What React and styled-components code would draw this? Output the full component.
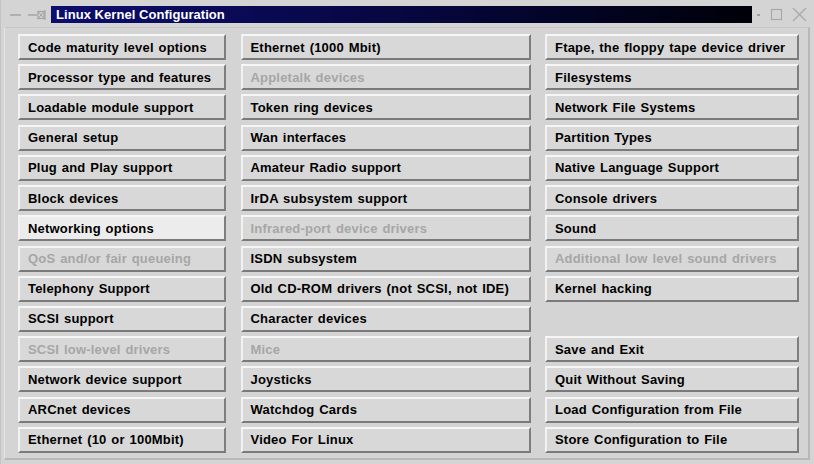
import React from 'react';
import styled, { createGlobalStyle } from 'styled-components';

const GlobalStyle = createGlobalStyle`
  html, body {
    margin: 0;
    padding: 0;
    background: #d4d4d4;
  }
  body {
    font-family: "Liberation Sans", Arial, sans-serif;
  }
`;

const Window = styled.div`
  width: 814px;
  height: 464px;
  box-sizing: border-box;
  background: #d4d4d4;
  display: flex;
  flex-direction: column;
  padding: 6px 4px 4px 3px;
  border-left: 1px solid #c4c4c4;
`;

const TitleBar = styled.div`
  display: flex;
  align-items: stretch;
  height: 17px;
`;

const LeftControls = styled.div`
  width: 47px;
  display: flex;
  align-items: center;
  padding-left: 5px;
  box-sizing: border-box;
`;

const Title = styled.div`
  flex: 1;
  background: linear-gradient(to right, #0d0d6e 0%, #06063c 55%, #000008 100%);
  color: #ffffff;
  font-weight: bold;
  font-size: 13px;
  line-height: 17px;
  padding-left: 5px;
  letter-spacing: 0.05px;
`;

const RightControls = styled.div`
  width: 58px;
  display: flex;
  align-items: center;
  justify-content: flex-end;
  padding-right: 2px;
  box-sizing: border-box;
`;

const Panel = styled.div`
  flex: 1;
  margin-top: 4px;
  border-top: 1px solid #c8c8c8;
  border-left: 1px solid #e6e6e6;
  border-right: 2px solid #b8b8b8;
  border-bottom: 2px solid #b8b8b8;
  display: grid;
  grid-template-columns: 208px 290px 254px;
  column-gap: 14.5px;
  grid-template-rows: repeat(14, 26px);
  row-gap: 4.22px;
  padding: 6px 0 0 13px;
`;

const Button = styled.div`
  box-sizing: border-box;
  height: 26px;
  display: flex;
  align-items: center;
  padding-left: 8px;
  background: ${(p) => (p.$active ? '#ececec' : '#d8d8d8')};
  border-top: 2px solid #f6f6f6;
  border-left: 2px solid #f2f2f2;
  border-right: 2px solid #7e7e7e;
  border-bottom: 2px solid #7a7a7a;
  color: ${(p) => (p.$disabled ? '#a6a6a6' : '#000000')};
  font-weight: bold;
  font-size: 13px;
  letter-spacing: 0.2px;
  word-spacing: 1px;
  white-space: nowrap;
  overflow: hidden;
`;

const Spacer = styled.div``;

const col1 = [
  ['Code maturity level options'],
  ['Processor type and features'],
  ['Loadable module support'],
  ['General setup'],
  ['Plug and Play support'],
  ['Block devices'],
  ['Networking options', 'active'],
  ['QoS and/or fair queueing', 'disabled'],
  ['Telephony Support'],
  ['SCSI support'],
  ['SCSI low-level drivers', 'disabled'],
  ['Network device support'],
  ['ARCnet devices'],
  ['Ethernet (10 or 100Mbit)'],
];

const col2 = [
  ['Ethernet (1000 Mbit)'],
  ['Appletalk devices', 'disabled'],
  ['Token ring devices'],
  ['Wan interfaces'],
  ['Amateur Radio support'],
  ['IrDA subsystem support'],
  ['Infrared-port device drivers', 'disabled'],
  ['ISDN subsystem'],
  ['Old CD-ROM drivers (not SCSI, not IDE)'],
  ['Character devices'],
  ['Mice', 'disabled'],
  ['Joysticks'],
  ['Watchdog Cards'],
  ['Video For Linux'],
];

const col3 = [
  ['Ftape, the floppy tape device driver'],
  ['Filesystems'],
  ['Network File Systems'],
  ['Partition Types'],
  ['Native Language Support'],
  ['Console drivers'],
  ['Sound'],
  ['Additional low level sound drivers', 'disabled'],
  ['Kernel hacking'],
  null,
  ['Save and Exit'],
  ['Quit Without Saving'],
  ['Load Configuration from File'],
  ['Store Configuration to File'],
];

const renderCell = (item, key) =>
  item ? (
    <Button key={key} $active={item[1] === 'active'} $disabled={item[1] === 'disabled'}>
      {item[0]}
    </Button>
  ) : (
    <Spacer key={key} />
  );

const App = () => {
  const cells = [];
  for (let r = 0; r < 14; r++) {
    cells.push(renderCell(col1[r], `a${r}`));
    cells.push(renderCell(col2[r], `b${r}`));
    cells.push(renderCell(col3[r], `c${r}`));
  }

  return (
    <>
      <GlobalStyle />
      <Window>
        <TitleBar>
          <LeftControls>
            <svg width="40" height="12" viewBox="0 0 40 12">
              <line x1="1" y1="6" x2="12" y2="6" stroke="#a4a4a4" strokeWidth="1.5" />
              <line x1="19" y1="6" x2="28" y2="6" stroke="#a4a4a4" strokeWidth="1.5" />
              <rect x="29" y="2.5" width="6" height="7" fill="none" stroke="#a4a4a4" strokeWidth="1.2" />
              <line x1="29" y1="2.5" x2="35" y2="9.5" stroke="#a4a4a4" strokeWidth="1" />
              <line x1="35" y1="2.5" x2="29" y2="9.5" stroke="#a4a4a4" strokeWidth="1" />
              <line x1="36" y1="1" x2="36" y2="11" stroke="#a4a4a4" strokeWidth="1.2" />
            </svg>
          </LeftControls>
          <Title>Linux Kernel Configuration</Title>
          <RightControls>
            <svg width="54" height="15" viewBox="0 0 54 15">
              <line x1="3" y1="8" x2="6" y2="8" stroke="#a0a0a0" strokeWidth="2" />
              <rect x="17.5" y="2.5" width="10" height="10" fill="none" stroke="#a8a8a8" strokeWidth="1.2" />
              <line x1="39" y1="1" x2="52" y2="14" stroke="#a8a8a8" strokeWidth="1.2" />
              <line x1="52" y1="1" x2="39" y2="14" stroke="#a8a8a8" strokeWidth="1.2" />
            </svg>
          </RightControls>
        </TitleBar>
        <Panel>{cells}</Panel>
      </Window>
    </>
  );
};

export default App;
